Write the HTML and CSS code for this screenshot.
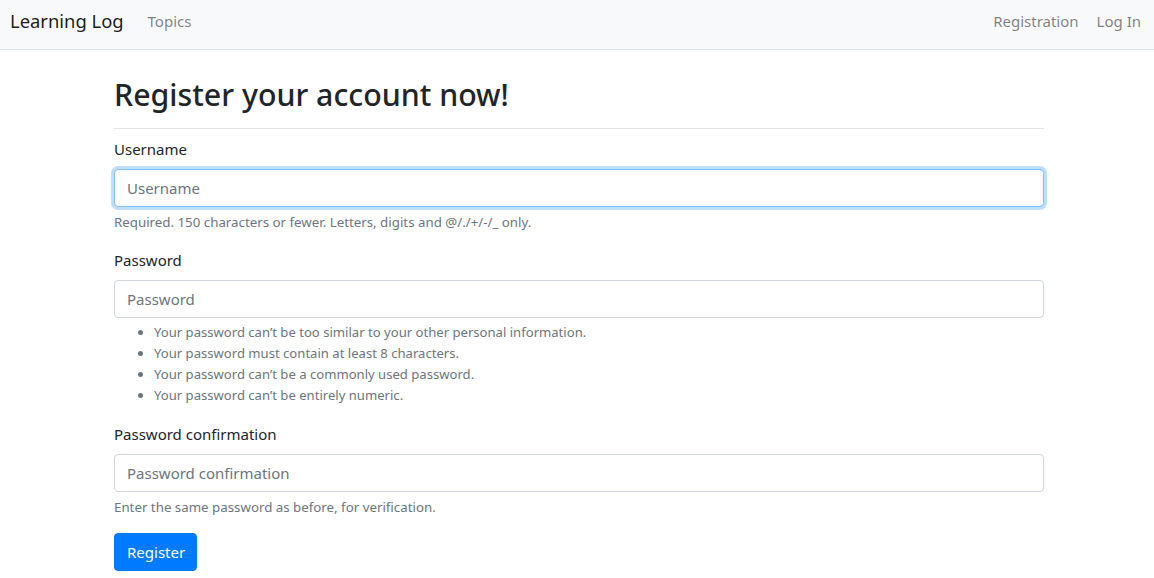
FILE: index.html
```
<!DOCTYPE html>
<html lang="en">
<head>
<meta charset="utf-8">
<title>Learning Log</title>
<link rel="stylesheet" href="styles.css">
</head>
<body>
<nav class="navbar">
  <div class="nav-left">
    <a class="brand" href="#">Learning Log</a>
    <a class="nav-link" href="#">Topics</a>
  </div>
  <div class="nav-right">
    <a class="nav-link" href="#">Registration</a>
    <a class="nav-link" href="#">Log In</a>
  </div>
</nav>
<main class="page">
  <div class="container">
    <h1 class="title">Register your account now!</h1>
    <hr class="rule">
    <form class="form">
      <div class="group">
        <label class="label" for="u">Username</label>
        <input class="input focused" id="u" type="text" placeholder="Username">
        <small class="help">Required. 150 characters or fewer. Letters, digits and @/./+/-/_ only.</small>
      </div>
      <div class="group">
        <label class="label" for="p1">Password</label>
        <input class="input" id="p1" type="password" placeholder="Password">
        <ul class="help-list">
          <li>Your password can’t be too similar to your other personal information.</li>
          <li>Your password must contain at least 8 characters.</li>
          <li>Your password can’t be a commonly used password.</li>
          <li>Your password can’t be entirely numeric.</li>
        </ul>
      </div>
      <div class="group">
        <label class="label" for="p2">Password confirmation</label>
        <input class="input" id="p2" type="password" placeholder="Password confirmation">
        <small class="help">Enter the same password as before, for verification.</small>
      </div>
      <button class="btn" type="button">Register</button>
    </form>
  </div>
</main>
</body>
</html>
```
FILE: styles.css
```
* { box-sizing: border-box; }
html, body { margin: 0; padding: 0; }
body {
  font-family: "Noto Sans", "Open Sans", sans-serif;
  font-size: 15px;
  line-height: 24px;
  color: #212529;
  background: #fff;
}
a { text-decoration: none; }
.navbar {
  height: 50px;
  background: #f8f9fa;
  border-bottom: 1px solid #dee2e6;
  display: flex;
  align-items: center;
  justify-content: space-between;
  padding: 0 13px 7px 10px;
}
.nav-left, .nav-right { display: flex; align-items: center; }
.brand {
  font-size: 18.4px;
  color: rgba(0,0,0,.9);
  margin-right: 24px;
}
.nav-link {
  color: rgba(0,0,0,.5);
  font-size: 15px;
}
.nav-right .nav-link { margin-left: 18px; }
.page { padding-left: 4px; }
.container {
  width: 930px;
  margin: 0 auto;
}
.title {
  font-size: 30.3px;
  font-weight: 500;
  line-height: 38px;
  margin: 26px 0 0;
}
.rule {
  border: 0;
  border-top: 1px solid rgba(0,0,0,.1);
  margin: 14px 0 8px;
}
.group { margin-bottom: 16px; }
.label {
  display: block;
  margin-bottom: 8px;
}
.input {
  display: block;
  width: 100%;
  height: 38px;
  padding: 6px 12px;
  font-family: inherit;
  font-size: 15px;
  color: #495057;
  background: #fff;
  border: 1px solid #ced4da;
  border-radius: 4px;
  outline: none;
}
.input::placeholder { color: #6c757d; }
.input.focused {
  border-color: #80bdff;
  box-shadow: 0 0 0 3px rgba(0,123,255,.25);
}
.help {
  display: block;
  margin-top: 5px;
  font-size: 13.3px;
  line-height: 20px;
  color: #6c757d;
}
.help-list {
  margin: 4px 0 0;
  padding-left: 40px;
  font-size: 13.1px;
  line-height: 21px;
  color: #6c757d;
}
.btn {
  display: inline-block;
  height: 38px;
  padding: 0 11px 0 12px;
  font-family: inherit;
  font-size: 15px;
  color: #fff;
  background: #007bff;
  border: 1px solid #007bff;
  border-radius: 4px;
}
```
